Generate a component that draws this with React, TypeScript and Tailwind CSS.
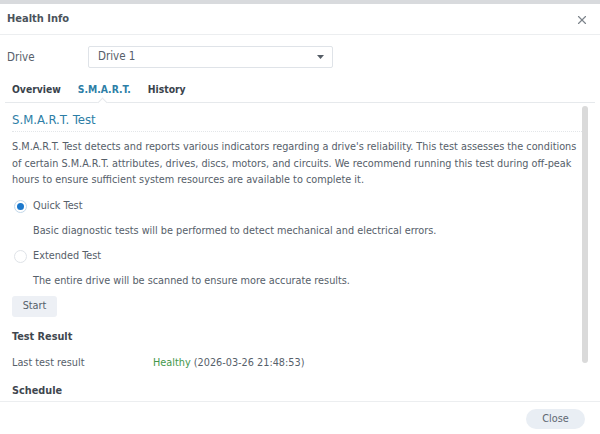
import { X } from 'lucide-react';

const FONT = { fontFamily: '"DejaVu Sans Condensed", "DejaVu Sans", sans-serif' };

function Radio({ checked, label }: { checked: boolean; label: string }) {
  return (
    <label className="flex items-center gap-[6px]">
      <span
        className={`w-[13px] h-[13px] rounded-full border grid place-items-center bg-white ${
          checked ? 'border-[#c3d8ea]' : 'border-[#dfe3e8]'
        }`}
      >
        {checked && <span className="w-[7px] h-[7px] rounded-full bg-[#1b78cc]" />}
      </span>
      <span>{label}</span>
    </label>
  );
}

export default function App() {
  return (
    <div className="w-[600px] h-[434px] bg-white flex flex-col text-[10.8px] text-[#56606a] overflow-hidden" style={FONT}>
      {/* Title bar */}
      <div className="h-[4px] bg-[#d8dadd] shrink-0" />
      <div className="h-[31px] shrink-0 flex items-center justify-between pt-[1px] pl-[7px] pr-[11px] border-b border-[#eceef0]">
        <span className="font-bold text-[11px] text-[#4b535b]">Health Info</span>
        <X className="w-[14px] h-[14px] text-[#7d848b]" strokeWidth={2} />
      </div>

      {/* Drive selector */}
      <div className="flex items-center h-[22px] mt-[11px] pl-[7px] shrink-0">
        <span className="w-[81px] text-[11.5px] pt-[1px]">Drive</span>
        <div className="w-[245px] h-[22px] border border-[#dfe3e8] rounded-[2px] flex items-center justify-between pl-[9px] pr-[8px] text-[11.5px]">
          <span>Drive 1</span>
          <svg width="7" height="4" viewBox="0 0 7 4"><path d="M0 0h7L3.5 4z" fill="#555d66" /></svg>
        </div>
      </div>

      {/* Tabs */}
      <div className="relative mx-[5px] mt-[10px] h-[25px] shrink-0 flex items-start gap-[17px] pl-[7px] pt-[3px] border-b border-[#e6e9ec] text-[10.3px] leading-[16px] font-bold">
        <span className="text-[#39424b]">Overview</span>
        <span className="text-[#2d7ea6]">S.M.A.R.T.</span>
        <span className="text-[#39424b]">History</span>
        <span className="absolute left-[94px] -bottom-[4px] w-[7px] h-[7px] bg-white border-l border-t border-[#e6e9ec] rotate-45" />
      </div>

      {/* Scrollable body */}
      <div className="relative flex-1 min-h-0 overflow-hidden">
        <div className="pl-[12px] pr-[18px]">
          <div className="pt-[9px] pb-[3px] leading-[16px] border-b border-dotted border-[#e3e6e9] text-[13px] text-[#2d7ea6]">S.M.A.R.T. Test</div>
          <p className="mt-[7px] leading-[16.5px]">
            S.M.A.R.T. Test detects and reports various indicators regarding a drive's reliability. This test assesses the conditions of
            certain S.M.A.R.T. attributes, drives, discs, motors, and circuits. We recommend running this test during off-peak hours to
            ensure sufficient system resources are available to complete it.
          </p>
          <div className="mt-[5px] h-[25px] flex items-center pl-[2px]">
            <Radio checked label="Quick Test" />
          </div>
          <div className="h-[25px] flex items-center pl-[21px]">Basic diagnostic tests will be performed to detect mechanical and electrical errors.</div>
          <div className="h-[25px] flex items-center pl-[2px]">
            <Radio checked={false} label="Extended Test" />
          </div>
          <div className="h-[25px] flex items-center pl-[21px]">The entire drive will be scanned to ensure more accurate results.</div>
          <button className="mt-[2px] h-[21px] w-[45px] rounded-[3px] bg-[#edf0f5] text-[10.8px] text-[#56606a]">Start</button>
          <div className="mt-[11px] h-[20px] flex items-center font-bold text-[#3f474f]">Test Result</div>
          <div className="mt-[6px] h-[20px] flex items-center">
            <span className="w-[141px]">Last test result</span>
            <span>
              <span className="text-[#43984b]">Healthy</span> (2026-03-26 21:48:53)
            </span>
          </div>
          <div className="mt-[9px] h-[18px] flex items-center font-bold text-[#3f474f]">Schedule</div>
        </div>
        {/* scrollbar thumb */}
        <div className="absolute right-[12px] top-[3px] w-[6px] h-[257px] rounded-[3px] bg-[#dadada]" />
      </div>

      {/* Footer */}
      <div className="h-[33px] border-t border-[#eceef0] flex items-start justify-end pt-[7px] pr-[15px] shrink-0">
        <button className="w-[59px] h-[20px] rounded-full bg-[#e9eef4] text-[10.8px] text-[#5f6872]">Close</button>
      </div>
    </div>
  );
}
